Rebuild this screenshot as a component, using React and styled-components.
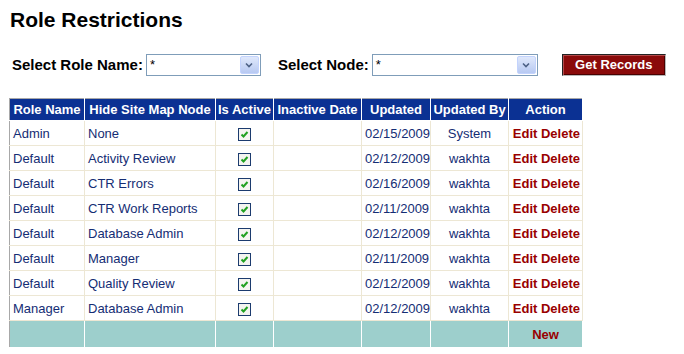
import React from 'react';
import styled, { createGlobalStyle } from 'styled-components';

const GlobalStyle = createGlobalStyle`
    body {
        margin: 0;
        background: #ffffff;
        font-family: Arial, "Liberation Sans", sans-serif;
    }
`

const Page = styled.div`
    padding: 8px 9px 0 9px;
`

const Title = styled.h1`
    margin: 0 0 0 1px;
    font-size: 21px;
    line-height: 24px;
    font-weight: bold;
    color: #000;
`

const Toolbar = styled.div`
    display: flex;
    align-items: center;
    margin-top: 21px;
    padding-left: 3px;
    height: 23px;
`

const Label = styled.span`
    font-size: 15px;
    font-weight: bold;
    color: #000;
    margin-right: 3px;
    margin-left: ${p => p.gap || 0}px;
`

const SelectBox = styled.div`
    display: flex;
    align-items: stretch;
    width: ${p => p.width}px;
    height: 22px;
    box-sizing: border-box;
    border: 1px solid #7f9db9;
    background: #fff;
`

const SelectText = styled.span`
    flex: 1;
    font-size: 13px;
    padding: 2px 0 0 3px;
    color: #000;
`

const Arrow = styled.span`
    width: 17px;
    margin: 1px;
    border-radius: 2px;
    background: linear-gradient(#dfe8fb, #b7c9f2);
    border: 1px solid #c3d3fd;
    display: flex;
    align-items: center;
    justify-content: center;
`

const Button = styled.button`
    margin-left: 24px;
    width: 104px;
    height: 22px;
    background: #8a0a0a;
    color: #fff;
    font-family: Arial, "Liberation Sans", sans-serif;
    font-size: 13px;
    font-weight: bold;
    border: 1px solid;
    border-color: #222 #b8b8b8 #b8b8b8 #222;
    box-shadow: inset 1px 1px 0 #b34a4a, inset -1px -1px 0 #4a0000;
    padding: 0;
`

const Grid = styled.table`
    margin-top: 22px;
    border-collapse: collapse;
    width: 573px;
    table-layout: fixed;
    font-size: 13px;
    border-left: 1px solid #a8a8a8;
    border-top: 1px solid #a8a8a8;
`

const Head = styled.th`
    background: #0b3193;
    color: #fff;
    font-weight: bold;
    height: 21px;
    padding: 0 2px;
    border: 1px solid #fff;
    border-top: none;
    text-align: center;
    white-space: nowrap;
    &:first-child { border-left: none; }
`

const Cell = styled.td`
    height: 24px;
    padding: 0 0 0 ${p => (p.align === 'left' ? 3 : 0)}px;
    border: 1px solid #ede7d4;
    color: #142d74;
    text-align: ${p => p.align || 'left'};
    white-space: nowrap;
    &:first-child { border-left: none; }
`

const ActionCell = styled(Cell)`
    color: #990000;
    font-weight: bold;
    text-align: right;
    padding-right: 2px;
`

const FootCell = styled.td`
    height: 24px;
    background: #9dcfcc;
    border: 1px solid #fff;
    border-left: 1px solid #e8f4f3;
    color: #990000;
    font-weight: bold;
    text-align: center;
    &:first-child { border-left: none; }
`

const Check = styled.span`
    display: inline-block;
    width: 11px;
    height: 11px;
    border: 1px solid #1c3b6e;
    background: #f4f4f0;
    vertical-align: middle;
    line-height: 0;
`

const rows = [
    ['Admin', 'None', '02/15/2009', 'System'],
    ['Default', 'Activity Review', '02/12/2009', 'wakhta'],
    ['Default', 'CTR Errors', '02/16/2009', 'wakhta'],
    ['Default', 'CTR Work Reports', '02/11/2009', 'wakhta'],
    ['Default', 'Database Admin', '02/12/2009', 'wakhta'],
    ['Default', 'Manager', '02/11/2009', 'wakhta'],
    ['Default', 'Quality Review', '02/12/2009', 'wakhta'],
    ['Manager', 'Database Admin', '02/12/2009', 'wakhta'],
]

const widths = [75, 131, 58, 88, 69, 78, 74]

function Select({ width }) {
    return (
        <SelectBox width={width}>
            <SelectText>*</SelectText>
            <Arrow>
                <svg width="8" height="6" viewBox="0 0 8 6">
                    <path d="M1 1.5 L4 4.5 L7 1.5" fill="none" stroke="#4d6185" strokeWidth="1.6" />
                </svg>
            </Arrow>
        </SelectBox>
    )
}

function CheckMark() {
    return (
        <Check>
            <svg width="11" height="11" viewBox="0 0 11 11">
                <path d="M2.5 5.5 L4.5 7.5 L8.5 3" fill="none" stroke="#21a121" strokeWidth="2" />
            </svg>
        </Check>
    )
}

export default function App() {
    return (
        <Page>
            <GlobalStyle />
            <Title>Role Restrictions</Title>
            <Toolbar>
                <Label>Select Role Name:</Label>
                <Select width={115} />
                <Label gap={17}>Select Node:</Label>
                <Select width={166} />
                <Button>Get Records</Button>
            </Toolbar>
            <Grid>
                <colgroup>
                    {widths.map((w, i) => <col key={i} style={{ width: w }} />)}
                </colgroup>
                <thead>
                    <tr>
                        <Head>Role Name</Head>
                        <Head>Hide Site Map Node</Head>
                        <Head>Is Active</Head>
                        <Head>Inactive Date</Head>
                        <Head>Updated</Head>
                        <Head>Updated By</Head>
                        <Head>Action</Head>
                    </tr>
                </thead>
                <tbody>
                    {rows.map((r, i) => (
                        <tr key={i}>
                            <Cell align="left">{r[0]}</Cell>
                            <Cell align="left">{r[1]}</Cell>
                            <Cell align="center"><CheckMark /></Cell>
                            <Cell align="left"></Cell>
                            <Cell align="left">{r[2]}</Cell>
                            <Cell align="center">{r[3]}</Cell>
                            <ActionCell>Edit Delete</ActionCell>
                        </tr>
                    ))}
                    <tr>
                        <FootCell />
                        <FootCell />
                        <FootCell />
                        <FootCell />
                        <FootCell />
                        <FootCell />
                        <FootCell>New</FootCell>
                    </tr>
                </tbody>
            </Grid>
        </Page>
    )
}
